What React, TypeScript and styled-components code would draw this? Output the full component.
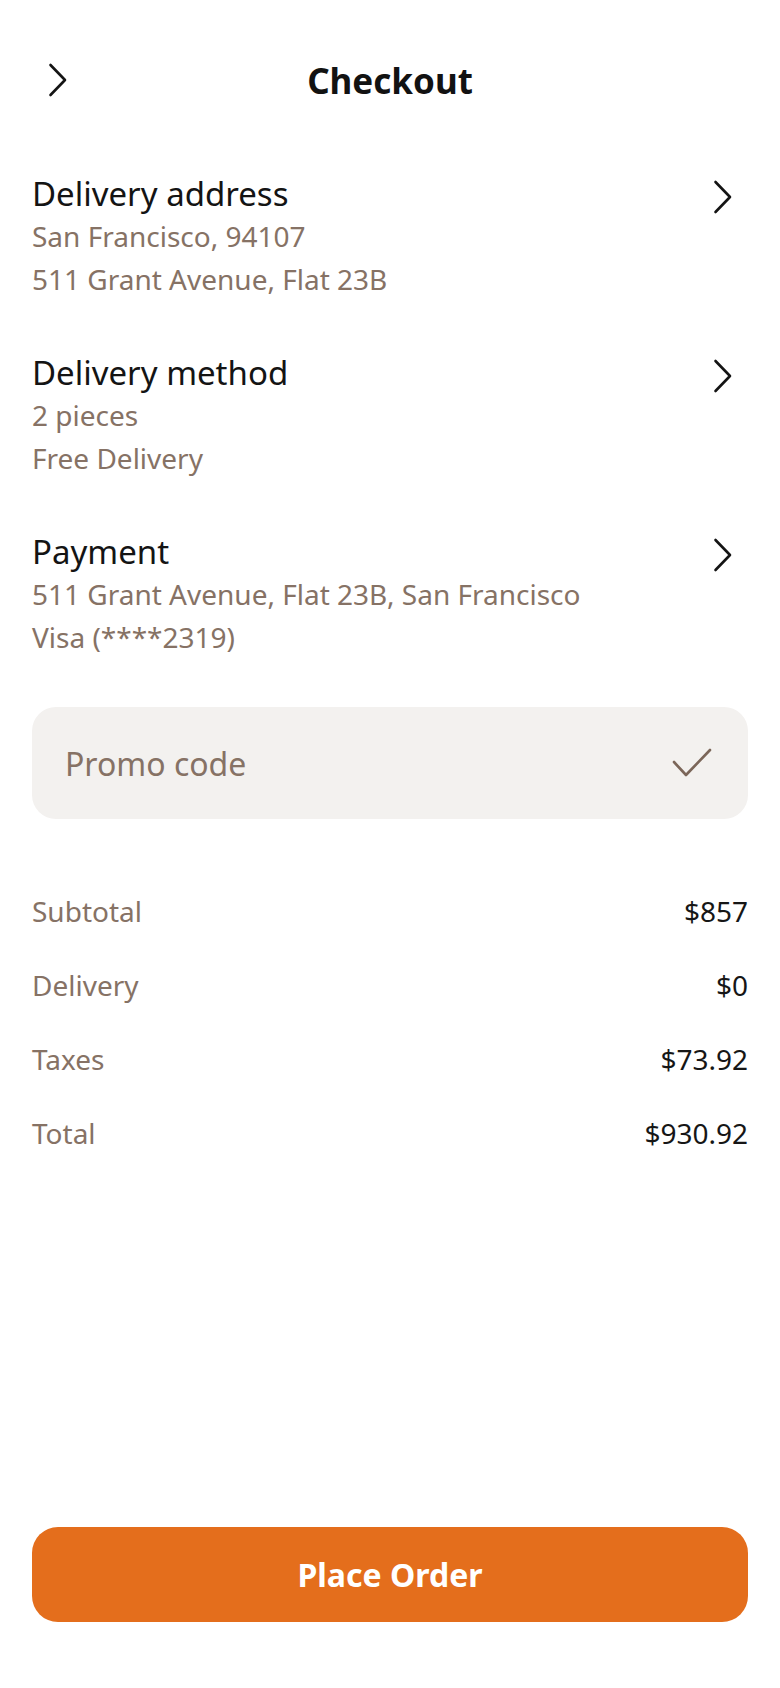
import styled, { createGlobalStyle } from "styled-components";

const GlobalStyle = createGlobalStyle`
  html, body {
    margin: 0;
    padding: 0;
    background: #ffffff;
  }
  body {
    font-family: "Noto Sans", "Open Sans", sans-serif;
    -webkit-font-smoothing: antialiased;
  }
  * {
    box-sizing: border-box;
  }
`;

const Page = styled.div`
  min-height: 100vh;
  display: flex;
  flex-direction: column;
  padding: 40px 32px 66px;
`;

const Header = styled.header`
  height: 80px;
  display: grid;
  grid-template-columns: 80px 1fr 80px;
  align-items: center;
`;

const BackButton = styled.button`
  border: none;
  background: none;
  padding: 0 0 0 16px;
  display: flex;
  align-items: center;
  cursor: pointer;
`;

const Title = styled.h1`
  margin: 0;
  text-align: center;
  font-size: 35px;
  font-weight: 700;
  color: #121212;
`;

const Sections = styled.div`
  margin-top: 53px;
  display: flex;
  flex-direction: column;
  gap: 51px;
`;

const Section = styled.section`
  display: flex;
  flex-direction: column;
`;

const SectionHead = styled.div`
  display: flex;
  align-items: center;
  justify-content: space-between;
  height: 42px;
`;

const SectionTitle = styled.h2`
  margin: 0;
  font-size: 33px;
  font-weight: 400;
  line-height: 42px;
  color: #141414;
`;

const SubLine = styled.div`
  font-size: 28px;
  line-height: 43px;
  color: #867265;
`;

const ChevronWrap = styled.span`
  display: flex;
  margin-right: 15px;
  margin-top: 6px;
`;

const PromoBox = styled.div`
  margin-top: 48px;
  height: 112px;
  border-radius: 24px;
  background: #f3f1ef;
  display: flex;
  align-items: center;
  justify-content: space-between;
  padding: 0 36px 0 33px;
`;

const PromoText = styled.span`
  font-size: 32px;
  color: #867265;
`;

const Totals = styled.div`
  margin-top: 55px;
  display: flex;
  flex-direction: column;
`;

const TotalRow = styled.div`
  height: 74px;
  display: flex;
  align-items: center;
  justify-content: space-between;
  font-size: 28px;
`;

const TotalLabel = styled.span`
  color: #867265;
`;

const TotalValue = styled.span`
  color: #161616;
`;

const PlaceOrder = styled.button`
  margin-top: auto;
  height: 95px;
  width: 100%;
  border: none;
  border-radius: 26px;
  background: #e46e1c;
  color: #ffffff;
  font-family: "Noto Sans", "Open Sans", sans-serif;
  font-size: 32px;
  font-weight: 700;
  cursor: pointer;
`;

const Chevron = () => (
  <svg width="20" height="34" viewBox="0 0 20 34" fill="none">
    <polyline
      points="2.5,2 17,17 2.5,32"
      stroke="#141414"
      strokeWidth="2.6"
      strokeLinecap="round"
      strokeLinejoin="round"
    />
  </svg>
);

const Check = () => (
  <svg width="40" height="30" viewBox="0 0 40 30" fill="none">
    <polyline
      points="2,14 14,27 38,2"
      stroke="#7b6659"
      strokeWidth="2.6"
      strokeLinecap="round"
      strokeLinejoin="round"
    />
  </svg>
);

const sections = [
  {
    title: "Delivery address",
    lines: ["San Francisco, 94107", "511 Grant Avenue, Flat 23B"],
  },
  {
    title: "Delivery method",
    lines: ["2 pieces", "Free Delivery"],
  },
  {
    title: "Payment",
    lines: ["511 Grant Avenue, Flat 23B, San Francisco", "Visa (****2319)"],
  },
];

const totals = [
  { label: "Subtotal", value: "$857" },
  { label: "Delivery", value: "$0" },
  { label: "Taxes", value: "$73.92" },
  { label: "Total", value: "$930.92" },
];

const App = () => {
  return (
    <>
      <GlobalStyle />
      <Page>
        <Header>
          <BackButton aria-label="Back">
            <Chevron />
          </BackButton>
          <Title>Checkout</Title>
          <span />
        </Header>

        <Sections>
          {sections.map((s) => (
            <Section key={s.title}>
              <SectionHead>
                <SectionTitle>{s.title}</SectionTitle>
                <ChevronWrap>
                  <Chevron />
                </ChevronWrap>
              </SectionHead>
              {s.lines.map((line) => (
                <SubLine key={line}>{line}</SubLine>
              ))}
            </Section>
          ))}
        </Sections>

        <PromoBox>
          <PromoText>Promo code</PromoText>
          <Check />
        </PromoBox>

        <Totals>
          {totals.map((t) => (
            <TotalRow key={t.label}>
              <TotalLabel>{t.label}</TotalLabel>
              <TotalValue>{t.value}</TotalValue>
            </TotalRow>
          ))}
        </Totals>

        <PlaceOrder>Place Order</PlaceOrder>
      </Page>
    </>
  );
};

export default App;
